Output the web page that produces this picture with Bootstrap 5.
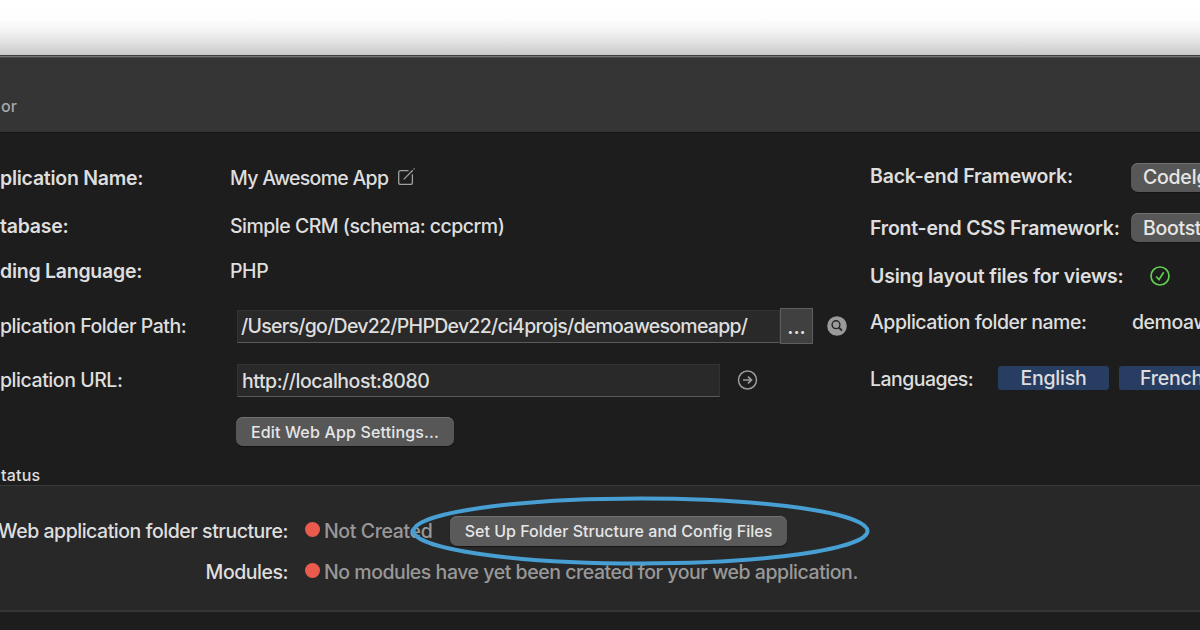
<!DOCTYPE html>
<html lang="en">
<head>
<meta charset="utf-8">
<meta name="viewport" content="width=device-width, initial-scale=1">
<title>Web App Editor</title>
<link href="https://cdn.jsdelivr.net/npm/bootstrap@5.3.0/dist/css/bootstrap.min.css" rel="stylesheet">
<script src="https://cdn.jsdelivr.net/npm/bootstrap@5.3.0/dist/js/bootstrap.bundle.min.js" defer></script>
<style>
body{width:1200px;height:630px;background:#1d1d1d;color:#dedede;font:450 19.5px/24px Inter,"Liberation Sans",sans-serif;letter-spacing:-.45px;white-space:nowrap}
.backdrop{height:55px;background:linear-gradient(#fff 0,#fdfdfd 20px,#f2f2f2 32px,#dedede 44px,#c8c8c8 55px)}
.titlebar{height:78px;background:#353535;border-top:1px solid #3c3c3c;box-shadow:inset 0 1px #747474,inset 0 2px #4a4a4a;border-bottom:1px solid #151515}
.titlebar span{font-size:16px;color:#a8a8a8;padding-left:1px;padding-top:23px;letter-spacing:.2px}
.form-main{height:352px}
.col-left{width:870px;padding-top:21px}
.col-right{width:330px;padding-top:17px;overflow:hidden}
.line{display:flex;align-items:center;flex:none}
.key{width:230px;flex:none}
.strong-key{font-weight:620;letter-spacing:-.26px}
.right-strong{width:261px;flex:none;font-weight:620;letter-spacing:-.21px}
.key-wide{width:262px;flex:none;letter-spacing:-.48px}
.key-lang{width:128px;flex:none;letter-spacing:-.55px}
.key-check{width:279px}
.ls-name{letter-spacing:-.72px}
.ls-db{letter-spacing:-.51px}
.ls-path{letter-spacing:-.73px}
.ls-url{letter-spacing:-.47px}
.h22{height:22px}.h40{height:40px}.h42{height:42px}.h44{height:44px}.h48{height:48px}.h52{height:52px}.h63{height:63px}.h65{height:65px}.h68{height:68px}
.field{height:33px;flex:none;background:#292929;border:1px solid #333;border-bottom:1px solid #5a5a5a;margin-left:7px;padding-left:4px}
.field-path{width:543px;padding-left:3px}
.field-url{width:483px;padding-top:1px}
.pushy{display:flex;align-items:center;justify-content:center;flex:none;height:30px;border:0;border-radius:7px;padding:0;background:#575757;box-shadow:inset 0 1px #707070,0 1px 1px #141414;font-size:16px;font-weight:450;color:#e6e6e6}
.pushy-edit{width:218px;height:29px;margin-left:6px;letter-spacing:.16px}
.pushy-setup{width:337px;margin-left:19px;background:#5a5a5a;letter-spacing:.02px}
.popup{width:90px;height:29px;justify-content:flex-start;padding-left:12px;font-size:19.5px;letter-spacing:-.3px}
.popup-back{margin-top:2px}
.popup-front{margin-bottom:1px;align-self:center}
.dots{width:33px;height:36px;flex:none;background:#404040;border:1px solid #5e5e5e;line-height:36px;text-align:center;font-weight:600;letter-spacing:0}
.icon-find{margin-left:14px}
.lang{display:flex;align-items:center;justify-content:center;flex:none;width:111px;height:24px;margin-bottom:2px;margin-right:10px;border-radius:3px;background:#273d61;letter-spacing:-.22px}
.lang-next{padding-right:6px}
.note-sm{font-size:16px;letter-spacing:.2px;padding-left:1px;padding-top:2px}
.status-box{height:127px;background:#282828;border-top:1px solid #3a3a3a;border-bottom:2px solid #363636;padding-top:25px}
.status-key{width:288px;flex:none;display:flex;justify-content:flex-end;letter-spacing:-.47px}
.dot{width:15px;height:15px;flex:none;border-radius:50%;background:#ea5b4e;margin:0 4px 3px 17px}
.dim{color:#989898;letter-spacing:-.46px}
.dim-first{width:107px;letter-spacing:-.38px}
.ring{left:408px;top:492px}
</style>
</head>
<body class="overflow-hidden position-relative">
<div class="backdrop"></div>
<header class="titlebar d-flex align-items-center"><span>or</span></header>
<main class="form-main d-flex">
<section class="col-left d-flex flex-column">
<div class="line h48"><div class="key strong-key">plication Name:</div><span class="ls-name">My Awesome App</span>
<svg class="ms-2" width="22" height="22" viewBox="0 0 22 22" fill="none" stroke="#a0a0a0" stroke-width="1.3"><path d="M12.5 3.7H4.6Q2.7 3.7 2.7 5.6V15.5Q2.7 17.4 4.6 17.4H14.5Q16.4 17.4 16.4 15.5V7.2M7.700 12.4L16.8 3.2M17.7 2.300L18.500 1.500"/></svg></div>
<div class="line h48"><div class="key strong-key">tabase:</div><span class="ls-db">Simple CRM (schema: ccpcrm)</span></div>
<div class="line h42"><div class="key strong-key">ding Language:</div><span>PHP</span></div>
<div class="line h68"><div class="key">plication Folder Path:</div><div class="field field-path d-flex align-items-center ls-path">/Users/go/Dev22/PHPDev22/ci4projs/demoawesomeapp/</div><div class="dots">...</div>
<svg class="icon-find" width="20" height="20" viewBox="0 0 20 20"><circle cx="10" cy="10" r="9.8" fill="#9a9a9a"/><g fill="none" stroke="#262626" stroke-width="1.4"><circle cx="9" cy="8.700" r="3.900"/><path d="M11.800 11.500L15 14.700" stroke-width="1.900"/></g></svg></div>
<div class="line h40"><div class="key">plication URL:</div><div class="field field-url d-flex align-items-center ls-url">http://localhost:8080</div>
<svg class="ms-3" width="22" height="22" viewBox="0 0 22 22" fill="none" stroke="#9c9c9c" stroke-width="1.5"><circle cx="11.5" cy="11" r="9"/><path d="M7 11H15.3M12 7.6L15.5 11L12 14.4" stroke-width="1.7"/></svg></div>
<div class="line h63"><div class="key"></div><button class="pushy pushy-edit">Edit Web App Settings...</button></div>
<div class="line h22 note-sm">tatus</div>
</section>
<section class="col-right">
<div class="line h52"><span class="right-strong">Back-end Framework:</span><button class="pushy popup popup-back">CodeIgniter</button></div>
<div class="line h52"><span class="right-strong">Front-end CSS Framework:</span><button class="pushy popup popup-front">Bootstrap</button></div>
<div class="line h44"><span class="right-strong key-check">Using layout files for views:</span>
<svg width="22" height="22" viewBox="0 0 22 22" fill="none" stroke="#62cf50" stroke-width="1.7"><circle cx="11" cy="11" r="9"/><path d="M7.2 11.5L10 14.700L14.700 7.300"/></svg></div>
<div class="line h48"><span class="key-wide">Application folder name:</span><span>demoawesomeapp</span></div>
<div class="line h65"><span class="key-lang">Languages:</span><span class="lang">English</span><span class="lang lang-next">French</span></div>
</section>
</main>
<section class="status-box">
<div class="line h40"><span class="status-key">Web application folder structure:</span><span class="dot"></span><span class="dim dim-first">Not Created</span><button class="pushy pushy-setup">Set Up Folder Structure and Config Files</button></div>
<div class="line h42"><span class="status-key">Modules:</span><span class="dot"></span><span class="dim">No modules have yet been created for your web application.</span></div>
</section>
<svg class="ring position-absolute" width="466" height="78" viewBox="0 0 466 78" fill="none" stroke="#479fd3" stroke-width="4"><ellipse cx="232.5" cy="39" rx="227" ry="32.5"/></svg>
</body>
</html>
